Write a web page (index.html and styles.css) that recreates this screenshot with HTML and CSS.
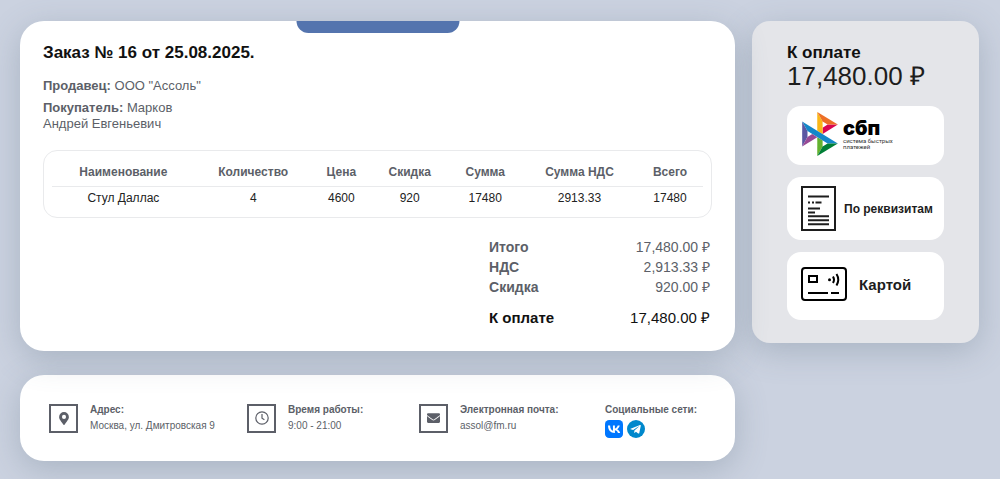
FILE: index.html
```html
<!DOCTYPE html>
<html lang="ru">
<head>
    <meta charset="UTF-8">
    <meta name="viewport" content="width=device-width, initial-scale=1.0">
    <title>Заказ № 16</title>
    <link rel="stylesheet" href="styles.css">
</head>
<body>
    <div class="page">
        <div class="content">
            <!-- Заказ -->
            <main class="card order">
                <div class="order-tab"></div>
                <h1>Заказ № 16 от 25.08.2025.</h1>
                <div class="parties">
                    <p><b>Продавец:</b> ООО "Ассоль"</p>
                    <p><b>Покупатель:</b> Марков Андрей Евгеньевич</p>
                </div>

                <div class="table-box">
                    <table>
                        <thead>
                            <tr>
                                <th>Наименование</th>
                                <th>Количество</th>
                                <th>Цена</th>
                                <th>Скидка</th>
                                <th>Сумма</th>
                                <th>Сумма НДС</th>
                                <th>Всего</th>
                            </tr>
                        </thead>
                        <tbody>
                            <tr>
                                <td>Стул Даллас</td>
                                <td>4</td>
                                <td>4600</td>
                                <td>920</td>
                                <td>17480</td>
                                <td>2913.33</td>
                                <td>17480</td>
                            </tr>
                        </tbody>
                    </table>
                </div>

                <dl class="totals">
                    <div><dt>Итого</dt><dd>17,480.00 ₽</dd></div>
                    <div><dt>НДС</dt><dd>2,913.33 ₽</dd></div>
                    <div><dt>Скидка</dt><dd>920.00 ₽</dd></div>
                    <div class="totals-pay"><dt>К оплате</dt><dd>17,480.00 ₽</dd></div>
                </dl>
            </main>

            <!-- Контакты -->
            <footer class="card contacts">
                <div class="contact">
                    <span class="contact-icon">
                        <svg width="10" height="13" viewBox="0 0 384 512"><path fill="currentColor" d="M172 502C27 291 0 270 0 192a192 192 0 1 1 384 0c0 78-27 99-172 310-10 13-30 13-40 0zM192 272a80 80 0 1 0 0-160 80 80 0 0 0 0 160z"/></svg>
                    </span>
                    <p><b>Адрес:</b><br>Москва, ул. Дмитровская 9</p>
                </div>
                <div class="contact">
                    <span class="contact-icon">
                        <svg width="14" height="14" viewBox="0 0 14 14" fill="none" stroke="currentColor"><circle cx="7" cy="7" r="6.2" stroke-width="1.2"/><path d="M7 3v4.2l2.4 1.6" stroke-width="1.2"/></svg>
                    </span>
                    <p><b>Время работы:</b><br>9:00 - 21:00</p>
                </div>
                <div class="contact">
                    <span class="contact-icon">
                        <svg width="13" height="10" viewBox="0 0 512 384"><path fill="currentColor" d="M502 127c4-3 10 0 10 5v204c0 26-22 48-48 48H48c-26 0-48-22-48-48V132c0-5 6-8 10-5 22 17 52 40 154 114 21 15 57 48 92 48 35 0 72-33 92-48 102-74 132-97 154-114zM256 256c23 0 57-29 73-41 133-96 143-105 173-128 6-5 10-12 10-19V48c0-26-22-48-48-48H48C22 0 0 22 0 48v20c0 7 4 14 10 19 30 23 40 32 173 128 16 12 50 41 73 41z"/></svg>
                    </span>
                    <p><b>Электронная почта:</b><br>assol@fm.ru</p>
                </div>
                <div class="social">
                    <b>Социальные сети:</b>
                    <div class="social-links">
                        <a href="#" aria-label="ВКонтакте">
                            <svg width="18" height="18" viewBox="0 0 24 24"><rect width="24" height="24" rx="5.5" fill="#07f"/><path fill="#fff" d="M12.8 17.2C7.300 17.200 4.200 13.500 4 7.200h2.800c.1 4.600 2.200 6.600 3.800 7V7.200h2.600v4c1.600-.2 3.200-2 3.800-4h2.600c-.4 2.500-2.200 4.200-3.500 5 1.300.6 3.300 2.200 4.100 5h-2.900c-.6-1.900-2.100-3.400-4.100-3.600v3.600z"/></svg>
                        </a>
                        <a href="#" aria-label="Telegram">
                            <svg width="18" height="18" viewBox="0 0 24 24"><circle cx="12" cy="12" r="12" fill="#08c"/><path fill="#fff" d="M4.800 11.600 17.300 6.700c.8-.3 1.300.2 1.100 1.100l-2 9.500c-.2.900-.8 1-1.500.6l-3-2.300-1.500 1.500c-.4.400-.8.200-.8-.3l.3-2.700 5.700-5.100c.3-.3 0-.4-.4-.2l-7 4.400-3.300-1c-.7-.2-.7-.4-.1-.6z"/></svg>
                        </a>
                    </div>
                </div>
            </footer>
        </div>

        <!-- Оплата -->
        <aside class="payment">
            <h2>К оплате</h2>
            <p class="payment-sum">17,480.00 ₽</p>
            <div class="methods">
                <button type="button" class="method method-sbp">
                    <svg width="36" height="44" viewBox="0 0 97.300 120">
                        <path fill="#5b57a2" d="M0 26.120l14.532 25.975v15.844L.017 93.863z"/>
                        <path fill="#d90751" d="M55.797 42.643l13.617-8.346 27.868-.026-41.485 25.414z"/>
                        <path fill="#fab718" d="M55.720 25.967l.077 34.390-14.566-8.950V0z"/>
                        <path fill="#ed6f26" d="M97.282 34.271l-27.869.026-13.693-8.330L41.231 0z"/>
                        <path fill="#63b22f" d="M55.797 94.007V77.322l-14.566-8.780.008 51.458z"/>
                        <path fill="#1487c9" d="M69.380 85.737L14.531 52.095 0 26.120l97.223 59.583z"/>
                        <path fill="#017f36" d="M41.240 120l14.556-25.993 13.583-8.270 27.843-.034z"/>
                        <path fill="#984995" d="M.017 93.863l41.333-25.320-13.896-8.526-12.922 7.922z"/>
                    </svg>
                    <span class="sbp-text">
                        <span class="sbp-name">сбп</span>
                        <span class="sbp-note">система быстрых<br>платежей</span>
                    </span>
                </button>
                <button type="button" class="method method-details">
                    <svg width="35" height="45" viewBox="0 0 35 45" fill="none" stroke="#1d1d1d" stroke-width="2">
                        <rect x="1" y="1" width="33" height="43"/>
                        <path d="M7 10.500h21M7 16.500h2M11 16.500h2M14.500 16.500h6M7 22.500h12M7 26.500h7M7 30.300h21M7 34.300h21M7 38.300h21"/>
                    </svg>
                    По реквизитам
                </button>
                <button type="button" class="method method-card">
                    <svg width="46" height="34" viewBox="0 0 46 34" fill="none" stroke="#000" stroke-width="2">
                        <rect x="1" y="1" width="44" height="32" rx="3"/>
                        <path d="M8 9h8v6H8zM7 26h20M30 26h8"/>
                        <path d="M32 9.500q2 3 0 6.500M35.500 7q3.500 5.500 0 11.500"/>
                        <circle cx="28.500" cy="12.700" r="1.500" fill="#000" stroke="none"/>
                    </svg>
                    Картой
                </button>
            </div>
        </aside>
    </div>
</body>
</html>
```
FILE: styles.css
```css
* {
    box-sizing: border-box;
}
body {
    margin: 0;
    padding: 21px 21px 18px 20px;
    font-family: "Liberation Sans", Arial, sans-serif;
    font-size: 13px;
    line-height: 16px;
    color: #5c5f68;
    background-color: #cbd2e0;
}
h1, h2, p, dl, dd {
    margin: 0;
}
h1, h2 {
    font-size: 17px;
    line-height: 20px;
    color: #111;
}
.page {
    display: grid;
    grid-template-columns: 1fr 227px;
    align-items: start;
    gap: 17px;
}
.content {
    display: grid;
    gap: 24px;
}
.card {
    background: #fff;
    border-radius: 24px;
    box-shadow: 0 8px 32px rgba(90, 110, 125, 0.3);
}

/* Заказ */
.order {
    position: relative;
    padding: 22px 23px 23px;
}
.order-tab {
    position: absolute;
    top: 0;
    left: 50%;
    width: 163px;
    height: 12px;
    transform: translateX(-50%);
    background: #5474ae;
    border-radius: 0 0 12px 12px;
}
.parties {
    width: 25%;
    margin: 15px 0 18px;
}
.parties p + p {
    margin-top: 6px;
}
.table-box {
    padding: 8px;
    border: 1px solid #e9eaec;
    border-radius: 14px;
}
table {
    width: 100%;
    border-collapse: collapse;
    font-size: 12px;
    text-align: center;
}
th {
    padding: 5px 6px;
    line-height: 17px;
    border-bottom: 1px solid #e9eaec;
}
td {
    padding: 3px 6px;
    color: #222;
}
.totals {
    width: 33.333%;
    margin: 19px 0 0 auto;
    padding-right: 2px;
    font-size: 14px;
    line-height: 20px;
}
.totals div {
    display: flex;
    justify-content: space-between;
}
.totals dt {
    font-weight: bold;
}
.totals .totals-pay {
    margin-top: 11px;
    font-size: 15px;
    color: #111;
}

/* Контакты */
.contacts {
    display: grid;
    grid-template-columns: 198fr 172fr 186fr 101fr;
    align-items: center;
    padding: 23px 29px;
    font-size: 10px;
}
.contact {
    display: flex;
    align-items: center;
    gap: 12px;
}
.contact-icon {
    display: flex;
    align-items: center;
    justify-content: center;
    width: 29px;
    height: 29px;
    border: 2px solid #5c5f68;
}
.social {
    padding-top: 4px;
}
.social-links {
    display: flex;
    gap: 4px;
    margin-top: 2px;
}
.social-links svg {
    display: block;
}

/* Оплата */
.payment {
    padding: 22px 35px 23px;
    background: #e4e5e9;
    border-radius: 18px;
    box-shadow: 0 8px 32px rgba(90, 110, 125, 0.3);
}
.payment-sum {
    font-size: 26px;
    line-height: 26px;
    color: #1d1d1d;
}
.methods {
    display: grid;
    gap: 12px;
    margin-top: 17px;
}
.method {
    display: flex;
    align-items: center;
    padding: 9px 8px 9px 14px;
    border: 0;
    border-radius: 14px;
    background: #fff;
    color: #1d1d1d;
    font-family: inherit;
    font-size: 12px;
    font-weight: bold;
    white-space: nowrap;
    cursor: pointer;
}
.method svg {
    flex-shrink: 0;
}
.method-sbp {
    gap: 5px;
    padding: 6px 15px 9px;
}
.method-details {
    gap: 8px;
}
.method-card {
    gap: 12px;
    padding: 15px 14px 19px;
    font-size: 15px;
}
.sbp-text {
    display: grid;
    text-align: left;
    color: #000;
}
.sbp-name {
    font-family: Inter, sans-serif;
    font-size: 20px;
    font-weight: 900;
    line-height: 20px;
}
.sbp-note {
    font-family: Roboto, sans-serif;
    font-size: 6px;
    font-weight: normal;
    line-height: 6px;
    color: #333;
}
```
